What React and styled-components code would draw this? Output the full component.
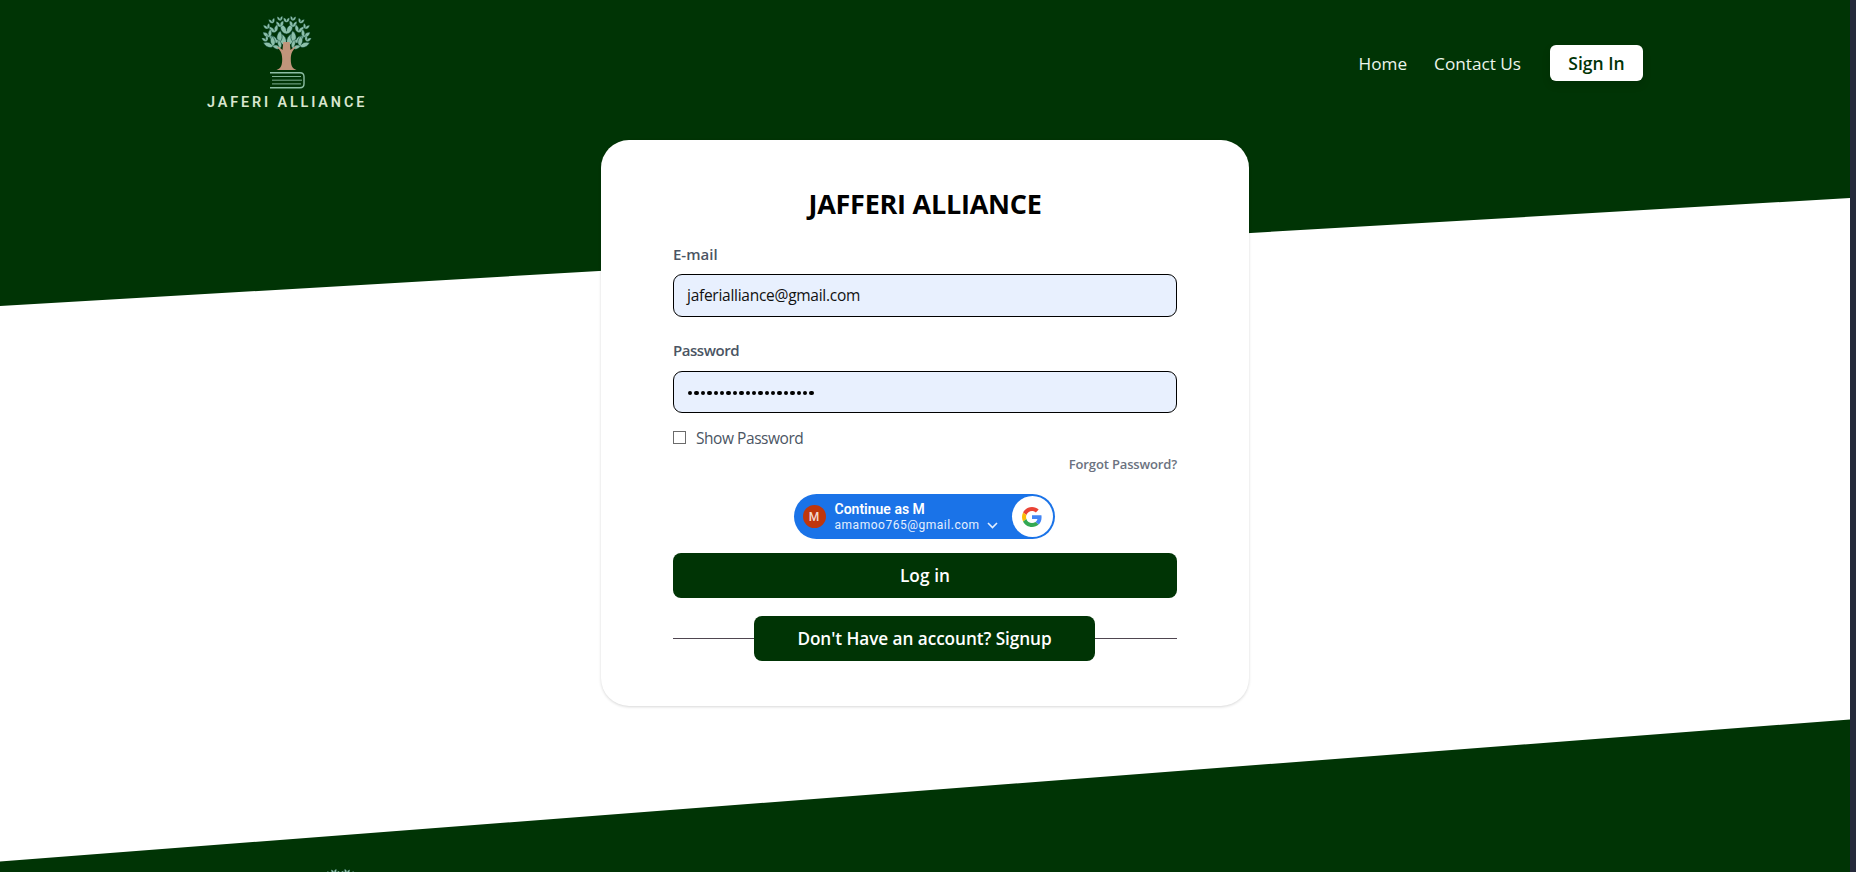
import React from "react";
import styled, { createGlobalStyle } from "styled-components";

const green = "#003405";

const Global = createGlobalStyle`
  * { box-sizing: border-box; }
  html, body { margin: 0; height: 872px; overflow: hidden; background: #fff; }
  body, input, button { font-family: "Open Sans", "Noto Sans", sans-serif; }
`;

const Page = styled.div`
  width: 1856px;
  height: 872px;
  overflow: hidden;
  border-right: 6px solid #252a3b;
  background: #fff;
  position: relative;
  display: flex;
  flex-direction: column;
`;

const Backdrop = styled.svg`
  position: absolute;
  inset: 0;
  width: 1850px;
  height: 872px;
`;

const Header = styled.header`
  position: relative;
  height: 140px;
  flex: none;
  padding: 0 207px;
  display: flex;
  justify-content: space-between;
  align-items: flex-start;
`;

const Brand = styled.div`
  display: flex;
  flex-direction: column;
  align-items: flex-start;
  padding-top: 12px;
`;

const TreeIcon = styled.svg`
  display: block;
  flex: none;
  width: 56px;
  height: 80px;
  margin-left: 52px;
`;

const BrandName = styled.div`
  font: 600 14.4px/16px Roboto, sans-serif;
  letter-spacing: 2.87px;
  color: #d9e6cf;
  white-space: nowrap;
  margin-top: 3px;
`;

const Nav = styled.nav`
  display: flex;
  align-items: center;
  padding-top: 45px;
`;

const NavLink = styled.a`
  color: #edf5ec;
  font-size: 17.2px;
  line-height: 35px;
  padding-top: 1px;
  margin-right: ${(p) => p.$gap}px;
  white-space: nowrap;
`;

const SignIn = styled.button`
  width: 93px;
  height: 36px;
  border: 0;
  border-radius: 6px;
  background: #fff;
  color: ${green};
  font-size: 17.5px;
  font-weight: 600;
  padding: 0;
  box-shadow: 0 4px 8px rgba(0, 0, 0, 0.12);
`;

const Card = styled.main`
  position: relative;
  flex: none;
  width: 648px;
  height: 566px;
  margin-left: 601px;
  border-radius: 28px;
  background: #fff;
  box-shadow: 0 1px 3px rgba(0, 0, 0, 0.16);
  padding: 44px 72px 0;
  display: flex;
  flex-direction: column;
`;

const Title = styled.h1`
  margin: 0;
  font-size: 27px;
  line-height: 40px;
  font-weight: 700;
  text-align: center;
  color: #000;
  letter-spacing: -0.25px;
`;

const Label = styled.label`
  display: block;
  font-size: 15px;
  font-weight: 600;
  line-height: 22px;
  color: #4b5563;
  letter-spacing: ${(p) => p.$track || 0}px;
  margin: ${(p) => p.$top}px 0 ${(p) => p.$bottom}px;
`;

const Field = styled.div`
  height: ${(p) => p.$h}px;
  border: 1px solid #000;
  border-radius: 9px;
  background: #e8f0fe;
  padding: 0 13px ${(p) => p.$lift || 0}px;
  display: flex;
  align-items: center;
  font-size: 15.5px;
  letter-spacing: -0.27px;
  color: #111;
`;

const Dots = styled.div`
  display: flex;
  gap: 2px;
  padding: 2px 0 0 1px;
`;

const Dot = styled.i`
  width: 4.4px;
  height: 4.4px;
  border-radius: 50%;
  background: #000;
`;

const ShowRow = styled.label`
  display: flex;
  align-items: center;
  gap: 10px;
  height: 24px;
  margin-top: 13px;
  font-size: 15.5px;
  letter-spacing: -0.45px;
  color: #4b5563;
`;

const Box = styled.span`
  width: 13px;
  height: 13px;
  border: 1px solid #6b6b6b;
  background: #fff;
  margin-top: -1px;
`;

const Forgot = styled.a`
  align-self: flex-end;
  font-size: 13px;
  font-weight: 600;
  line-height: 20px;
  color: #6b7280;
  margin-top: 4px;
  letter-spacing: -0.14px;
`;

const GoogleButton = styled.div`
  align-self: center;
  width: 261px;
  height: 45px;
  margin: 20px 2px 14px 0;
  border-radius: 23px;
  background: #1a73e8;
  color: #fff;
  display: flex;
  align-items: center;
  padding: 0 2px 0 9px;
  font-family: Roboto, sans-serif;
`;

const Avatar = styled.span`
  width: 23px;
  height: 23px;
  border-radius: 50%;
  background: #bf360c;
  color: #f3d9d0;
  font-size: 12px;
  font-weight: 500;
  line-height: 24px;
  text-align: center;
`;

const Account = styled.div`
  margin-left: 9px;
  padding-top: 2px;
  width: 145px;
  white-space: nowrap;
`;

const AccountName = styled.div`
  font-size: 14px;
  font-weight: 600;
  line-height: 15px;
`;

const AccountMail = styled.div`
  font-size: 12px;
  line-height: 16px;
  letter-spacing: 0.52px;
  color: #e4effe;
`;

const Chevron = styled.svg`
  width: 11px;
  height: 7px;
  margin: 17px 0 0 7px;
`;

const GoogleCircle = styled.span`
  margin-left: auto;
  width: 41px;
  height: 41px;
  border-radius: 50%;
  background: #fff;
  display: flex;
  align-items: center;
  justify-content: center;
`;

const GreenButton = styled.button`
  width: ${(p) => p.$w}px;
  height: 45px;
  flex: none;
  border: 0;
  border-radius: 8px;
  background: ${green};
  color: #fff;
  font-size: 17.2px;
  font-weight: 600;
  padding: 0;
  letter-spacing: ${(p) => p.$track || 0}px;
  white-space: nowrap;
`;

const SignupRow = styled.div`
  display: flex;
  align-items: center;
  margin-top: 18px;
`;

const Rule = styled.span`
  flex: ${(p) => (p.$w ? `0 0 ${p.$w}px` : "1")};
  height: 1px;
  background: #4f4650;
`;

const Footer = styled.footer`
  position: relative;
  margin-top: auto;
  height: 7px;
  overflow: hidden;
  padding-left: 261px;
`;

const leaves = [
  [27.5, 27, 0, 1.5], [27.5, 17, 0, 1.1], [17.5, 26, -22, 1.15], [37.5, 26, 22, 1.15],
  [21, 12, -5, 0.65], [34, 12, 5, 0.65], [15, 17, -14, 0.78], [40, 17, 14, 0.78],
  [9, 22, -22, 0.75], [46, 22, 22, 0.75], [11.5, 31, -38, 1], [43.5, 31, 38, 1],
  [19, 33.5, -44, 0.8], [36, 33.5, 44, 0.8], [21, 6.5, -8, 0.48], [27.5, 8, 0, 0.52],
  [34, 6.5, 8, 0.48], [13, 9, -16, 0.52], [42, 9, 16, 0.52], [8, 14.5, -20, 0.55],
  [47, 14.5, 20, 0.55], [6.5, 27, -28, 0.55], [48.5, 27, 28, 0.55],
];

function Tree() {
  return (
    <TreeIcon viewBox="0 0 56 80">
      {leaves.map(([x, y, r, s], i) => (
        <path
          key={i}
          transform={`translate(${x} ${y}) rotate(${r}) scale(${s})`}
          d="M0 4.500C-4.500 4-6 0-5.500-4.500-2-3.500 0-1 0 2C0-1 2-3.500 5.500-4.500 6 0 4.500 4 0 4.500z"
          fill="#8cbfaa"
          stroke="#06402e"
          strokeWidth="0.5"
        />
      ))}
      <path
        d="M17.500 58c4.500-1.500 5.700-5 5.700-11 0-6-2-9-5.700-12.500 3 .6 4.500 2 6 3.500l.8-8h6.400l.8 8c1.500-1.500 3-2.900 6-3.500-3.700 3.500-5.700 6.500-5.700 12.500 0 6 1.200 9.500 5.700 11z"
        fill="#c0957b"
      />
      <g fill="none" stroke="#8dbea5">
        <path d="M11 60.700h30c3 0 4 2 4 4v7c0 2-1 4-4 4H11" strokeWidth="1.4" />
        <path d="M13 64.500h29M13 68.200h30M13 71.900h29" strokeWidth="0.9" />
      </g>
    </TreeIcon>
  );
}

export default function App() {
  return (
    <Page>
      <Global />
      <Backdrop viewBox="0 0 1850 872">
        <path d="M0 0H1850V198L0 306z" fill={green} />
        <path d="M0 861.5L1850 719.5V872H0z" fill={green} />
      </Backdrop>
      <Header>
        <Brand>
          <Tree />
          <BrandName>JAFERI ALLIANCE</BrandName>
        </Brand>
        <Nav>
          <NavLink $gap={27}>Home</NavLink>
          <NavLink $gap={29}>Contact Us</NavLink>
          <SignIn>Sign In</SignIn>
        </Nav>
      </Header>
      <Card>
        <Title>JAFFERI ALLIANCE</Title>
        <Label $top={19} $bottom={9}>E-mail</Label>
        <Field $h={43} $lift={2}>jaferialliance@gmail.com</Field>
        <Label $top={22} $bottom={10} $track={-0.45}>Password</Label>
        <Field $h={42}>
          <Dots>
            {Array.from({ length: 20 }, (_, i) => (
              <Dot key={i} />
            ))}
          </Dots>
        </Field>
        <ShowRow>
          <Box />
          Show Password
        </ShowRow>
        <Forgot>Forgot Password?</Forgot>
        <GoogleButton>
          <Avatar>M</Avatar>
          <Account>
            <AccountName>Continue as M</AccountName>
            <AccountMail>amamoo765@gmail.com</AccountMail>
          </Account>
          <Chevron viewBox="0 0 11 7">
            <path d="M1 1l4.500 4.500L10 1" fill="none" stroke="#e4effe" strokeWidth="1.6" />
          </Chevron>
          <GoogleCircle>
            <svg width="20" height="20" viewBox="0 0 48 48">
              <path fill="#EA4335" d="M24 9.500c3.540 0 6.710 1.220 9.210 3.600l6.850-6.850C35.900 2.380 30.470 0 24 0 14.620 0 6.510 5.380 2.560 13.220l7.980 6.190C12.430 13.720 17.740 9.500 24 9.500z" />
              <path fill="#4285F4" d="M46.980 24.550c0-1.570-.15-3.090-.38-4.550H24v9.020h12.940c-.58 2.960-2.260 5.480-4.780 7.180l7.730 6c4.510-4.180 7.090-10.360 7.090-17.650z" />
              <path fill="#FBBC05" d="M10.530 28.590c-.48-1.450-.76-2.990-.76-4.590s.27-3.140.76-4.590l-7.980-6.190C.92 16.460 0 20.120 0 24c0 3.880.92 7.540 2.560 10.780l7.970-6.190z" />
              <path fill="#34A853" d="M24 48c6.480 0 11.930-2.130 15.890-5.810l-7.730-6c-2.150 1.450-4.920 2.300-8.160 2.300-6.260 0-11.570-4.220-13.470-9.910l-7.980 6.190C6.510 42.620 14.620 48 24 48z" />
            </svg>
          </GoogleCircle>
        </GoogleButton>
        <GreenButton $w={504} $track={0.1}>Log in</GreenButton>
        <SignupRow>
          <Rule $w={81} />
          <GreenButton $w={341} $track={-0.06}>Don't Have an account? Signup</GreenButton>
          <Rule />
        </SignupRow>
      </Card>
      <Footer>
        <Tree />
      </Footer>
    </Page>
  );
}
